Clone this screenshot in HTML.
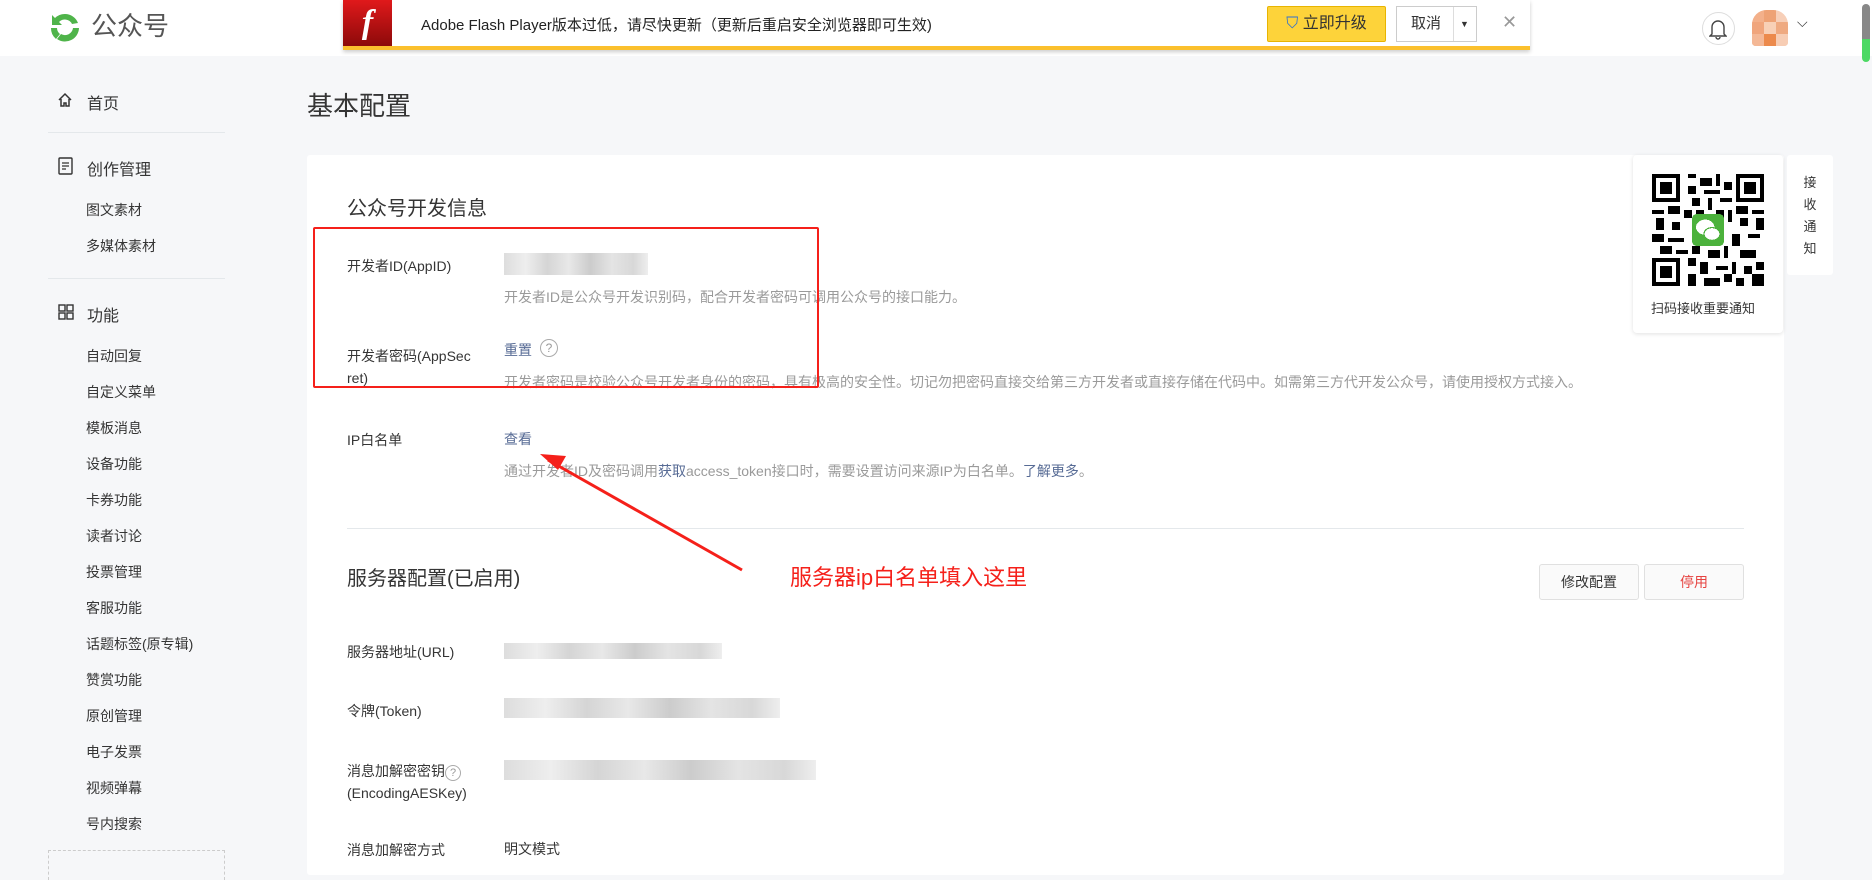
<!DOCTYPE html>
<html><head><meta charset="utf-8"><style>
*{margin:0;padding:0;box-sizing:border-box}
body{width:1872px;height:865px;overflow:hidden;background:#f6f7f9;font-family:"Liberation Sans","Noto Sans CJK SC",sans-serif;color:#353535;position:relative}
.a{position:absolute;white-space:nowrap}
.top{position:absolute;left:0;top:0;width:1872px;height:56px;background:#fff}
.sb{font-size:14px;color:#353535}
.hd{font-size:16px;color:#353535}
.hr{position:absolute;left:48px;width:177px;height:1px;background:#e4e8eb}
.lbl{font-size:14px;color:#353535}
.desc{font-size:14px;color:#9a9a9a}
.link{color:#576b95;font-size:14px}
.blur{position:absolute;height:18px;background:linear-gradient(90deg,#ddd,#eee 15%,#d5d5d5 30%,#e8e8e8 45%,#ccc 60%,#e4e4e4 75%,#d8d8d8 90%,#eee)}
.btn{position:absolute;top:564px;height:36px;width:100px;border:1px solid #e0e0e0;border-radius:3px;background:#fafafa;font-size:14px;text-align:center;line-height:34px}
</style></head><body>
<div class="top"></div>
<svg class="a" style="left:48px;top:11px" width="34" height="34" viewBox="0 0 34 34"><path d="M17 3a14 14 0 0 1 13 9l-6 1a8 8 0 0 0-13-2l3 3H4V4l3 3A14 14 0 0 1 17 3z" fill="#4fb44a"/><path d="M31 17a14 14 0 0 1-22 11l4-5a8 8 0 0 0 12-6z" fill="#4fb44a"/><path d="M3 17h6a8 8 0 0 0 3 6l-4 5A14 14 0 0 1 3 17z" fill="#4fb44a"/></svg>
<div class="a" style="left:91px;top:13px;font-size:26px;line-height:26px;color:#555">公众号</div>
<div class="a" style="left:343px;top:0;width:1187px;height:50px;background:#fff;border-bottom:4px solid #fbc02d;box-shadow:0 2px 4px rgba(0,0,0,.2)"></div>
<div class="a" style="left:343px;top:0;width:49px;height:46px;background:linear-gradient(#e0191b,#8c0a0a);color:#fff;font:italic bold 34px 'Liberation Serif',serif;text-align:center;line-height:46px">f</div>
<div class="a" style="left:421px;top:14px;font-size:15px;color:#222">Adobe Flash Player版本过低，请尽快更新（更新后重启安全浏览器即可生效)</div>
<div class="a" style="left:1267px;top:6px;width:119px;height:36px;background:#fdd33a;border:1px solid #e8b400;border-radius:2px;font-size:16px;line-height:34px;text-align:center;color:#333"><span style="color:#2d6fd1">⛉</span> 立即升级</div>
<div class="a" style="left:1396px;top:6px;width:81px;height:36px;border:1px solid #ccc;font-size:15px;line-height:34px;padding-left:14px;color:#333">取消<span style="position:absolute;left:56px;top:0;height:34px;border-left:1px solid #ddd;padding-left:6px;font-size:9px">▼</span></div>
<div class="a" style="left:1502px;top:12px;font-size:18px;color:#999">✕</div>
<div class="a" style="left:1702px;top:12px;width:33px;height:33px;border:1px solid #ddd;border-radius:50%"></div>
<svg class="a" style="left:1709px;top:18px" width="18" height="22" viewBox="0 0 18 22"><path d="M3 16V9a6 6 0 0 1 12 0v7l2 2H1zM7 19a2 2 0 0 0 4 0" fill="none" stroke="#444" stroke-width="1.4"/></svg>
<div class="a" style="left:1752px;top:10px;width:36px;height:36px;border-radius:40% 40% 10% 10%;overflow:hidden;background:
linear-gradient(90deg,#f3b08a 33%,#eea275 33% 66%,#f7cfb8 66%)"><div style="position:absolute;top:12px;left:0;width:36px;height:12px;background:linear-gradient(90deg,#f0a57c 33%,#f8d0b6 33% 66%,#efaa81 66%)"></div><div style="position:absolute;top:24px;left:0;width:36px;height:12px;background:linear-gradient(90deg,#f4b896 33%,#ec8a4c 33% 66%,#f7cdb4 66%)"></div></div>
<div class="a" style="left:1797px;top:14px;font-size:14px;color:#333">⌵</div>
<div class="a" style="left:1862px;top:4px;width:8px;height:58px;border-radius:4px;background:linear-gradient(#888 60%,#4cd964 60%)"></div>
<svg class="a" style="left:57px;top:92px" width="16" height="16" viewBox="0 0 16 16"><path d="M2 8L8 2l6 6M4 7v7h3v-3h2v3h3V7" fill="none" stroke="#333" stroke-width="1.5"/></svg>
<div class="a hd" style="left:87px;top:90px">首页</div>
<div class="hr" style="top:132px"></div>
<svg class="a" style="left:58px;top:157px" width="16" height="18" viewBox="0 0 16 18"><rect x="1" y="1" width="13" height="16" rx="1" fill="none" stroke="#333" stroke-width="1.4"/><path d="M4 6h7M4 9h7M4 12h4" stroke="#333" stroke-width="1.3"/></svg>
<div class="a hd" style="left:87px;top:156px">创作管理</div>
<div class="a sb" style="left:86px;top:200px">图文素材</div>
<div class="a sb" style="left:86px;top:236px">多媒体素材</div>
<div class="hr" style="top:278px"></div>
<svg class="a" style="left:58px;top:304px" width="16" height="16" viewBox="0 0 16 16"><g fill="none" stroke="#333" stroke-width="1.4"><rect x="1" y="1" width="6" height="6"/><rect x="9" y="1" width="6" height="6"/><rect x="1" y="9" width="6" height="6"/><rect x="9" y="9" width="6" height="6"/></g></svg>
<div class="a hd" style="left:87px;top:302px">功能</div>
<div class="a sb" style="left:86px;top:338px;line-height:36px">自动回复<br>自定义菜单<br>模板消息<br>设备功能<br>卡券功能<br>读者讨论<br>投票管理<br>客服功能<br>话题标签(原专辑)<br>赞赏功能<br>原创管理<br>电子发票<br>视频弹幕<br>号内搜索</div>
<div class="a" style="left:48px;top:850px;width:177px;height:30px;border:1px dashed #ccc;border-bottom:none"></div>
<div class="a" style="left:307px;top:86px;font-size:26px;color:#353535">基本配置</div>
<div class="a" style="left:307px;top:155px;width:1477px;height:720px;background:#fff;border-radius:3px"></div>
<div class="a" style="left:347px;top:192px;font-size:20px;color:#353535">公众号开发信息</div>
<div class="a lbl" style="left:347px;top:256px">开发者ID(AppID)</div>
<div class="blur" style="left:504px;top:253px;width:144px;height:22px"></div>
<div class="a desc" style="left:504px;top:287px">开发者ID是公众号开发识别码，配合开发者密码可调用公众号的接口能力。</div>
<div class="a lbl" style="left:347px;top:345px;line-height:22px">开发者密码(AppSec<br>ret)</div>
<div class="a link" style="left:504px;top:340px">重置</div>
<div class="a" style="left:540px;top:339px;width:18px;height:18px;border:1px solid #aaa;border-radius:50%;font-size:12px;color:#999;text-align:center;line-height:16px">?</div>
<div class="a desc" style="left:504px;top:372px">开发者密码是校验公众号开发者身份的密码，具有极高的安全性。切记勿把密码直接交给第三方开发者或直接存储在代码中。如需第三方代开发公众号，请使用授权方式接入。</div>
<div class="a" style="left:313px;top:227px;width:506px;height:161px;border:2px solid #f5201a;border-radius:2px"></div>
<div class="a lbl" style="left:347px;top:430px">IP白名单</div>
<div class="a link" style="left:504px;top:429px">查看</div>
<div class="a desc" style="left:504px;top:461px">通过开发者ID及密码调用<span style="color:#576b95">获取</span>access_token接口时，需要设置访问来源IP为白名单。<span style="color:#576b95">了解更多</span>。</div>
<div class="a" style="left:347px;top:528px;width:1397px;height:1px;background:#e4e8eb"></div>
<div class="a" style="left:347px;top:562px;font-size:20px;color:#353535">服务器配置(已启用)</div>
<div class="a" style="left:790px;top:560px;font-size:22px;color:#f5201a">服务器ip白名单填入这里</div>
<svg class="a" style="left:530px;top:440px" width="220" height="140"><line x1="212" y1="130" x2="18" y2="20" stroke="#f5201a" stroke-width="3"/><path d="M10 14L36 16L28 30Z" fill="#f5201a"/></svg>
<div class="btn" style="left:1539px;color:#353535">修改配置</div>
<div class="btn" style="left:1644px;color:#e64340">停用</div>
<div class="a lbl" style="left:347px;top:642px">服务器地址(URL)</div>
<div class="blur" style="left:504px;top:643px;width:218px;height:16px"></div>
<div class="a lbl" style="left:347px;top:701px">令牌(Token)</div>
<div class="blur" style="left:504px;top:698px;width:276px;height:20px"></div>
<div class="a lbl" style="left:347px;top:760px;line-height:22px">消息加解密密钥<span style="display:inline-block;width:16px;height:16px;border:1px solid #aaa;border-radius:50%;font-size:11px;text-align:center;line-height:14px;color:#999">?</span><br>(EncodingAESKey)</div>
<div class="blur" style="left:504px;top:760px;width:312px;height:20px"></div>
<div class="a lbl" style="left:347px;top:840px">消息加解密方式</div>
<div class="a lbl" style="left:504px;top:839px">明文模式</div>
<div class="a" style="left:1633px;top:155px;width:150px;height:178px;background:#fff;border-radius:4px;box-shadow:0 1px 4px rgba(0,0,0,.12)"></div>
<svg class="a" style="left:1652px;top:174px" width="112" height="112" viewBox="0 0 28 28" shape-rendering="crispEdges">
<rect width="28" height="28" fill="#fff"/>
<g fill="#000">
<path d="M0 0h7v7H0zM21 0h7v7h-7zM0 21h7v7H0z"/>
<path d="M9 0h2v1H9zM12 1h3v2h-3zM16 0h1v3h-1zM18 2h2v2h-2zM9 3h2v2H9zM13 4h4v1h-4zM10 6h2v2h-2zM14 6h1v3h-1zM17 6h3v1h-3zM0 9h3v1H0zM4 8h3v2H4zM8 9h2v2H8zM11 9h2v1h-2zM16 9h2v2h-2zM19 9h1v3h-1zM21 8h3v2h-3zM25 9h3v1h-3zM1 11h2v3H1zM5 12h2v2H5zM22 11h2v2h-2zM26 11h2v3h-2zM0 15h3v2H0zM4 16h4v1H4zM20 15h2v3h-2zM24 15h3v1h-3zM2 18h3v2H2zM6 19h3v1H6zM10 18h2v2h-2zM14 19h3v2h-3zM18 18h1v3h-1zM22 19h4v2h-4zM9 21h2v2H9zM12 22h2v3h-2zM16 23h3v1h-3zM20 22h1v3h-1zM23 23h2v2h-2zM26 22h2v2h-2zM9 25h2v3H9zM13 26h4v2h-4zM18 25h2v2h-2zM21 26h2v2h-2zM25 25h3v3h-3z"/>
</g>
<g fill="#fff"><path d="M1 1h5v5H1zM22 1h5v5h-5zM1 22h5v5H1z"/></g>
<g fill="#000"><path d="M2 2h3v3H2zM23 2h3v3h-3zM2 23h3v3H2z"/></g>
<rect x="10" y="10" width="8" height="8" rx="1.2" fill="#4cb23c"/>
<ellipse cx="13.3" cy="13.3" rx="2.3" ry="1.9" fill="#fff"/><ellipse cx="15" cy="15" rx="2" ry="1.6" fill="#fff" stroke="#4cb23c" stroke-width=".3"/>
</svg>
<div class="a" style="left:1651px;top:298px;font-size:13px;color:#353535">扫码接收重要通知</div>
<div class="a" style="left:1787px;top:155px;width:46px;height:120px;background:#fff;border-radius:3px;font-size:13px;color:#353535;text-align:center;line-height:22px;padding-top:17px">接<br>收<br>通<br>知</div>
</body></html>
